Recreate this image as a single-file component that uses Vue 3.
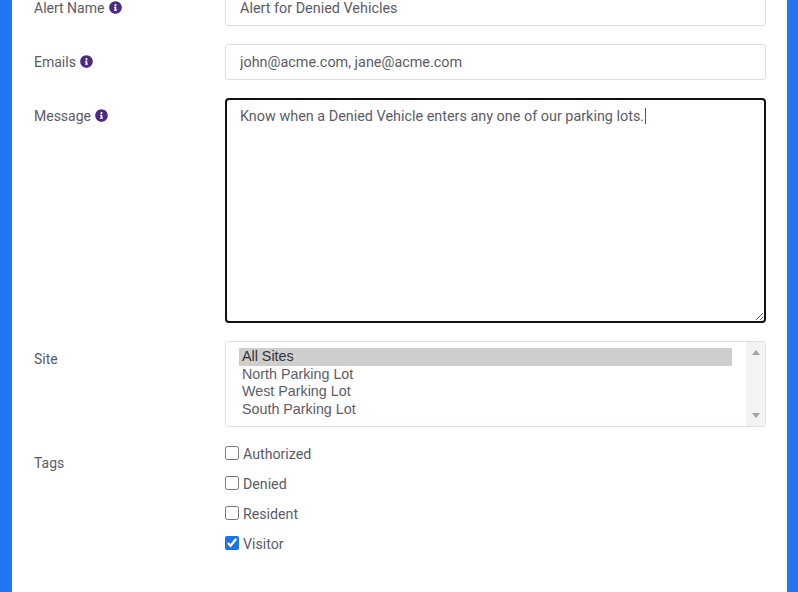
<template>
  <div class="page">
    <form class="alert-form" @submit.prevent>
      <div class="form-row">
        <label class="row-label">Alert Name <svg class="info" viewBox="0 0 512 512"><path d="M256 8C119 8 8 119 8 256s111 248 248 248 248-111 248-248S393 8 256 8zm0 110a42 42 0 1 1 0 84 42 42 0 0 1 0-84zm56 254c0 7-5 12-12 12h-88c-7 0-12-5-12-12v-24c0-7 5-12 12-12h12v-64h-12c-7 0-12-5-12-12v-24c0-7 5-12 12-12h64c7 0 12 5 12 12v100h12c7 0 12 5 12 12v24z"/></svg></label>
        <input class="text-input" type="text" v-model="alertName" />
      </div>

      <div class="form-row">
        <label class="row-label">Emails <svg class="info" viewBox="0 0 512 512"><path d="M256 8C119 8 8 119 8 256s111 248 248 248 248-111 248-248S393 8 256 8zm0 110a42 42 0 1 1 0 84 42 42 0 0 1 0-84zm56 254c0 7-5 12-12 12h-88c-7 0-12-5-12-12v-24c0-7 5-12 12-12h12v-64h-12c-7 0-12-5-12-12v-24c0-7 5-12 12-12h64c7 0 12 5 12 12v100h12c7 0 12 5 12 12v24z"/></svg></label>
        <input class="text-input" type="text" v-model="emails" />
      </div>

      <div class="form-row">
        <label class="row-label">Message <svg class="info" viewBox="0 0 512 512"><path d="M256 8C119 8 8 119 8 256s111 248 248 248 248-111 248-248S393 8 256 8zm0 110a42 42 0 1 1 0 84 42 42 0 0 1 0-84zm56 254c0 7-5 12-12 12h-88c-7 0-12-5-12-12v-24c0-7 5-12 12-12h12v-64h-12c-7 0-12-5-12-12v-24c0-7 5-12 12-12h64c7 0 12 5 12 12v100h12c7 0 12 5 12 12v24z"/></svg></label>
        <div class="message-wrap">
          <textarea class="message" v-model="message"></textarea>
          <span class="caret"></span>
        </div>
      </div>

      <div class="form-row">
        <label class="row-label">Site</label>
        <div class="site-box">
          <div class="site-list">
            <div
              v-for="s in sites"
              :key="s"
              class="site-opt"
              :class="{ selected: s === site }"
              @click="site = s"
            >{{ s }}</div>
          </div>
          <div class="scroll-track">
            <span class="arrow up"></span>
            <span class="arrow down"></span>
          </div>
        </div>
      </div>

      <div class="form-row tags-row">
        <label class="row-label">Tags</label>
        <div class="tag-list">
          <label v-for="t in tags" :key="t.name" class="tag">
            <input type="checkbox" v-model="t.on" />
            <span>{{ t.name }}</span>
          </label>
        </div>
      </div>
    </form>
  </div>
</template>

<script setup>
import { ref } from "vue";

const alertName = ref("Alert for Denied Vehicles");
const emails = ref("john@acme.com, jane@acme.com");
const message = ref("Know when a Denied Vehicle enters any one of our parking lots.");
const sites = ["All Sites", "North Parking Lot", "West Parking Lot", "South Parking Lot"];
const site = ref("All Sites");
const tags = ref([
  { name: "Authorized", on: false },
  { name: "Denied", on: false },
  { name: "Resident", on: false },
  { name: "Visitor", on: true },
]);
</script>

<style>
html, body { overflow: hidden; }
</style>

<style scoped>
.page {
  height: 100vh;
  box-sizing: border-box;
  background: #fff;
  border-left: 12px solid #2176f5;
  border-right: 11px solid #2176f5;
  overflow: hidden;
  font-family: Roboto, "Liberation Sans", sans-serif;
  font-size: 14px;
  color: #5c5c66;
}

.alert-form {
  margin-top: -10px;
  padding: 0 21px 0 22px;
  display: flex;
  flex-direction: column;
  gap: 18px;
}

.form-row { display: grid; grid-template-columns: 191px 541px; }
.row-label { padding-top: 8px; line-height: 20px; display: block; }

.info { width: 13px; height: 13px; fill: #4b2a7f; vertical-align: -1px; margin-left: 1px; }

.text-input {
  box-sizing: border-box;
  width: 100%;
  height: 36px;
  padding: 0 14px;
  border: 1px solid #dcdfe3;
  border-radius: 3px;
  background: #fff;
  font: inherit;
  font-size: 14.4px;
  color: #5c5c66;
  outline: none;
}

.message-wrap { position: relative; height: 225px; }
.message {
  display: block;
  box-sizing: border-box;
  width: 100%;
  height: 100%;
  padding: 7px 13px;
  border: 2px solid #111;
  border-radius: 4px;
  background: #fff;
  font: inherit;
  font-size: 14.4px;
  line-height: 20px;
  color: #5c5c66;
  outline: none;
}
.caret {
  position: absolute;
  left: 420px;
  top: 10px;
  width: 1px;
  height: 16px;
  background: #555;
}

.site-box {
  box-sizing: border-box;
  height: 86px;
  display: flex;
  justify-content: space-between;
  border: 1px solid #dcdfe3;
  border-radius: 3px;
  overflow: hidden;
}
.site-list { flex: 1; padding: 6px 13px; font-family: "Liberation Sans", Arial, sans-serif; font-size: 14.3px; }
.site-opt { height: 17.7px; line-height: 17px; padding-left: 3px; width: 493px; box-sizing: border-box; }
.site-opt.selected { background: #cecece; color: #333; }

.scroll-track {
  width: 19px;
  background: #f3f3f3;
  display: flex;
  flex-direction: column;
  justify-content: space-between;
  align-items: center;
  padding: 8px 0;
  box-sizing: border-box;
}
.arrow { width: 0; height: 0; border-left: 4px solid transparent; border-right: 4px solid transparent; }
.arrow.up { border-bottom: 5px solid #a3a3a3; }
.arrow.down { border-top: 5px solid #a3a3a3; }

.tags-row .row-label { padding-top: 12px; }
.tags-row { margin-top: -4px; }
.tag-list { display: flex; flex-direction: column; gap: 10px; padding-top: 3px; }
.tag { display: flex; align-items: center; height: 20px; gap: 4px; font-size: 14.2px; }
.tag input { width: 14px; height: 14px; margin: 0 0 3px; accent-color: #1a73e8; }
</style>
